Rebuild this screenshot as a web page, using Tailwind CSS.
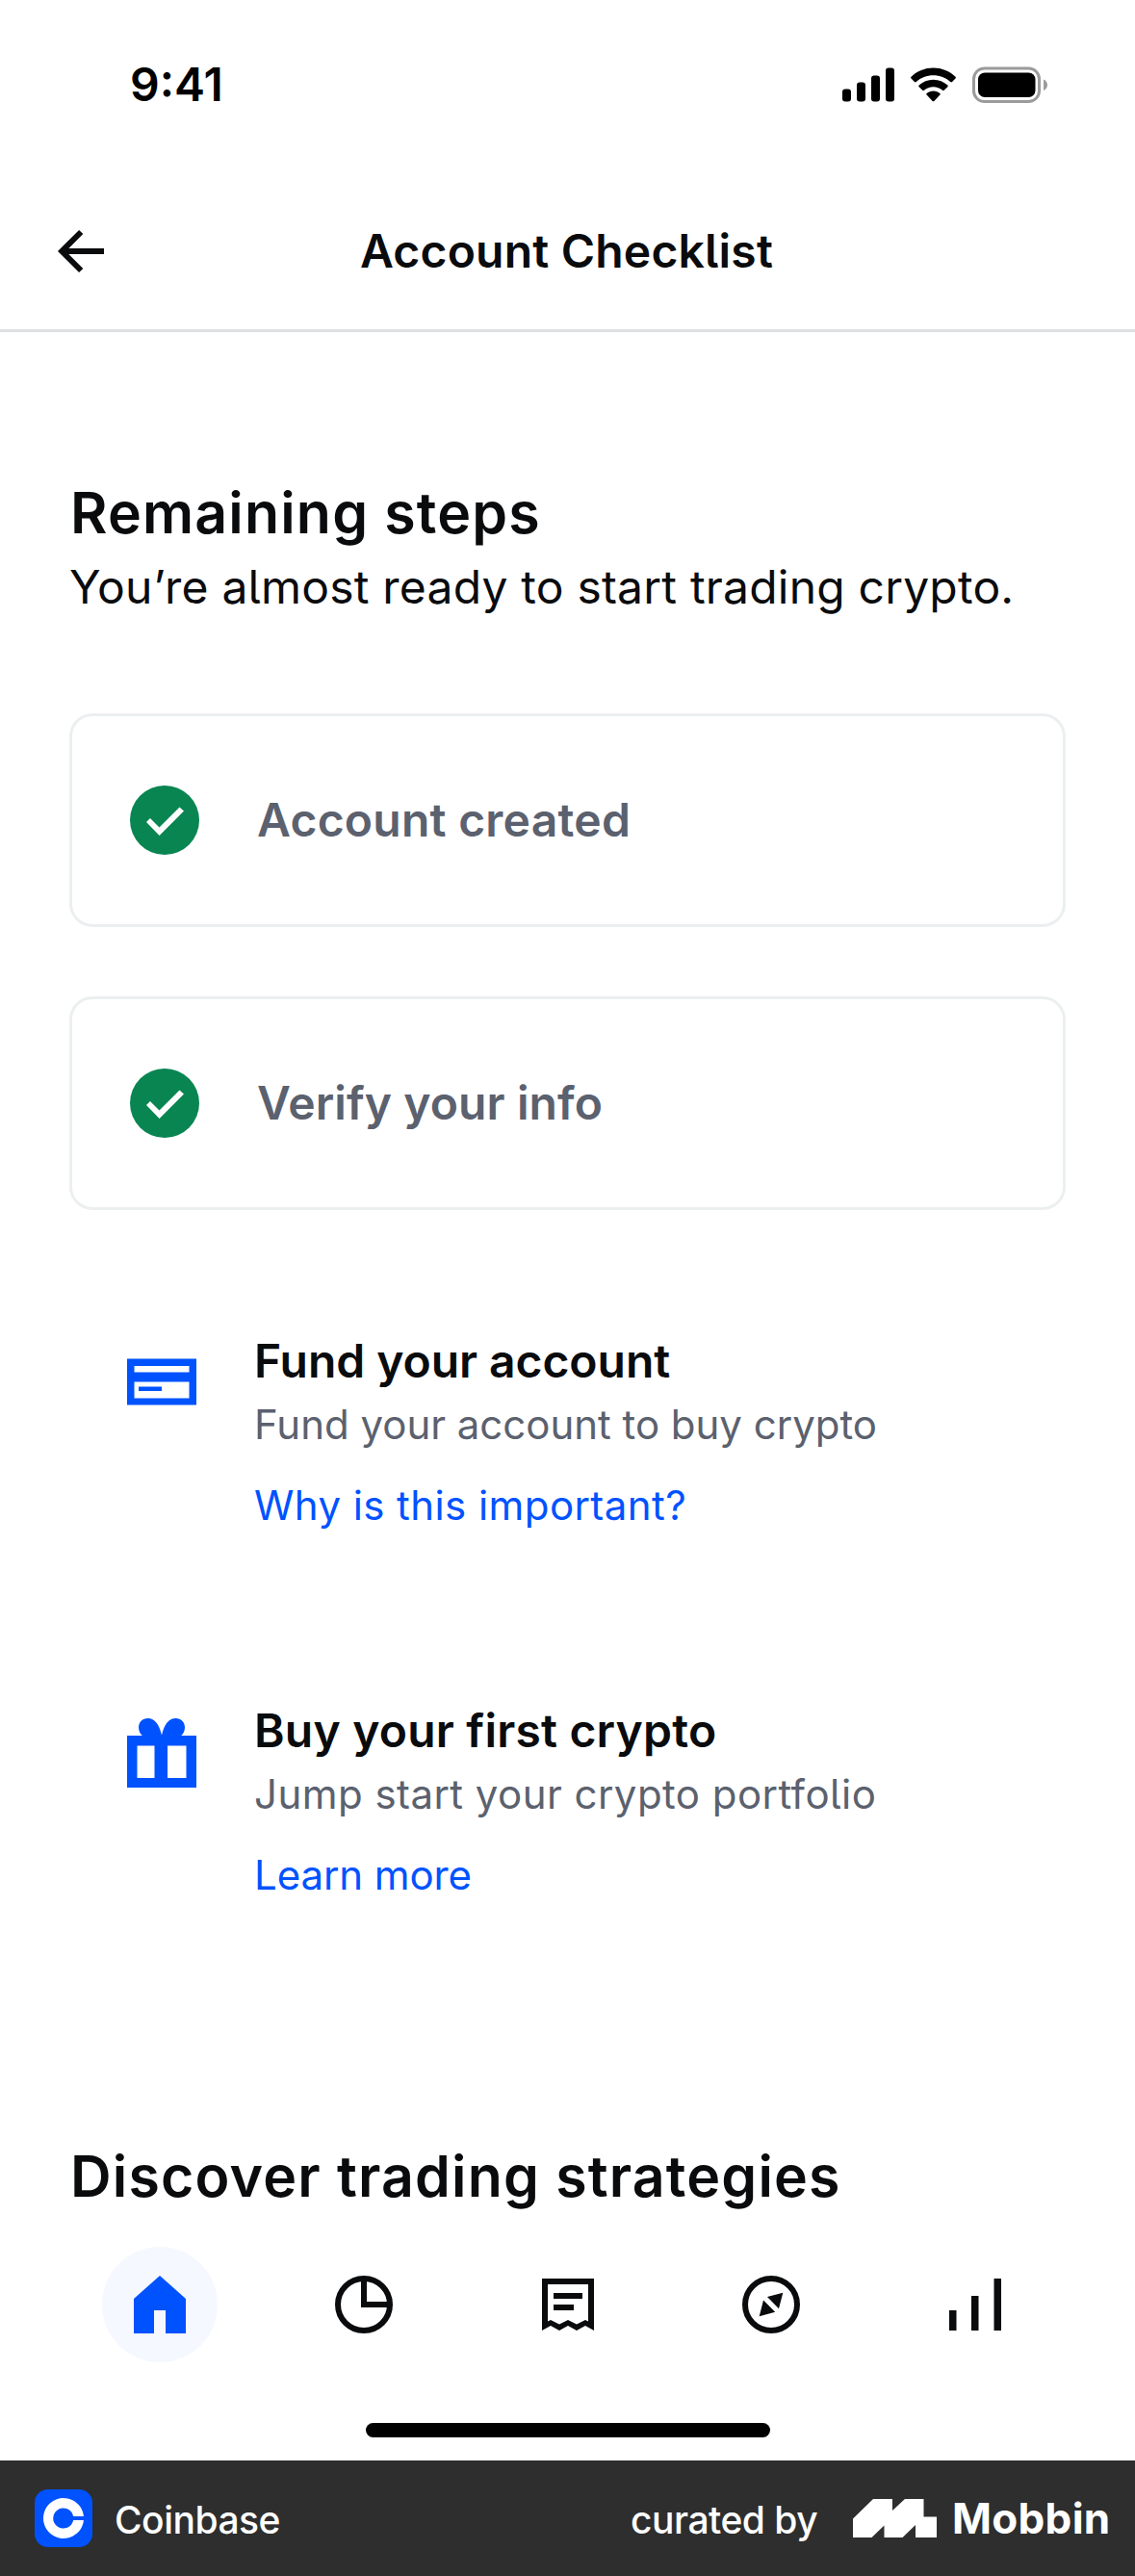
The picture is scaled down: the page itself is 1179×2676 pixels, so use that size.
<!DOCTYPE html>
<html lang="en">
<head>
<meta charset="utf-8">
<title>Account Checklist</title>
<script src="https://cdn.jsdelivr.net/npm/@tailwindcss/browser@4"></script>
</head>
<body class="w-[1179px] bg-white font-['Inter',sans-serif] text-[#0a0b0d] whitespace-nowrap [font-feature-settings:'cv05']">
<div class="flex h-[2556px] flex-col">

  <!-- Status bar -->
  <div class="flex h-[180px] shrink-0 items-center justify-between pr-[91px] pb-[5px] pl-[135px] text-black">
    <span class="text-5xl leading-[60px] font-semibold">9:41</span>
    <div class="flex items-center">
      <svg class="h-[36px] w-[54px]" viewBox="0 0 54 36" fill="currentColor">
        <rect x="0" y="22.5" width="9" height="13" rx="3"/><rect x="15" y="15.500" width="9" height="20" rx="3"/><rect x="30" y="8.500" width="9" height="27" rx="3"/><rect x="45" y="0.500" width="9" height="35" rx="3"/>
      </svg>
      <svg class="ml-[17px] h-[36px] w-[47px]" viewBox="0 0 47 36" fill="currentColor">
        <path d="M23.500 0.500C32.300 0.500 40.500 3.900 46.500 9.700Q47.300 10.600 46.500 11.500L43 15Q42.100 15.800 41.200 15C36.400 10.700 30.200 8.300 23.500 8.300S10.600 10.700 5.800 15Q4.900 15.800 4 15L0.500 11.500Q-0.300 10.600 0.500 9.700C6.500 3.900 14.700 0.500 23.500 0.500Z"/>
        <path d="M23.500 12.700C29.300 12.700 34.500 14.900 38.400 18.500Q39.200 19.400 38.400 20.200L34.700 23.700Q33.900 24.400 33 23.700C30.400 21.500 27.100 20.200 23.500 20.200S16.600 21.500 14 23.700Q13.100 24.400 12.300 23.700L8.600 20.200Q7.800 19.400 8.600 18.500C12.500 14.900 17.700 12.700 23.500 12.700Z"/>
        <path d="M23.500 24.500C26.200 24.500 28.600 25.400 30.400 26.900Q31.200 27.700 30.400 28.600L24.400 34.900Q23.500 35.700 22.600 34.900L16.600 28.600Q15.800 27.700 16.600 26.900C18.400 25.400 20.800 24.500 23.500 24.500Z"/>
      </svg>
      <svg class="ml-[17px] h-[38px] w-[78px]" viewBox="0 0 78 38">
        <rect x="1.500" y="2" width="68" height="34.500" rx="11" fill="none" stroke="#9b9b9b" stroke-width="3"/>
        <rect x="6" y="6.500" width="59.500" height="25.500" rx="7" fill="#000"/>
        <path d="M74 13.500Q78 15.500 78 19.300T74 25Z" fill="#9b9b9b"/>
      </svg>
    </div>
  </div>

  <!-- Title bar -->
  <header class="relative flex h-[165px] shrink-0 items-center justify-center border-b-[3px] border-[#dedfe0]">
    <svg class="absolute left-[60px] h-[46px] w-[48px]" viewBox="0 0 48 46" fill="none" stroke="currentColor" stroke-width="6">
      <path d="M48 23H4M24.200 3L4.200 23L24.200 43"/>
    </svg>
    <h1 class="pr-[2px] text-5xl leading-[60px] font-semibold tracking-[0.2px]">Account Checklist</h1>
  </header>

  <main class="flex flex-col px-[72px] pt-[152px]">
    <h2 class="pl-px text-[59px] leading-[72px] font-semibold tracking-[1.18px]">Remaining steps</h2>
    <p class="text-5xl leading-[82px] tracking-[0.2px]">You’re almost ready to start trading crypto.</p>

    <div class="mt-[90px] flex flex-col gap-[72px] text-5xl leading-[66px] font-semibold text-[#5b616e]">
      <div class="flex h-[222px] items-center gap-[60px] rounded-[24px] border-[3px] border-[#eceff0] pl-[60px]">
        <svg class="size-[72px]" viewBox="0 0 72 72"><circle cx="36" cy="36" r="36" fill="#098551"/><path d="M17 38L21 34L30.500 43.500L51.500 22.500L56 26.500L30.600 52Z" fill="#fff"/></svg>
        <span class="tracking-[0.25px]">Account created</span>
      </div>
      <div class="flex h-[222px] items-center gap-[60px] rounded-[24px] border-[3px] border-[#eceff0] pl-[60px]">
        <svg class="size-[72px]" viewBox="0 0 72 72"><circle cx="36" cy="36" r="36" fill="#098551"/><path d="M17 38L21 34L30.500 43.500L51.500 22.500L56 26.500L30.600 52Z" fill="#fff"/></svg>
        <span class="tracking-[0.1px]">Verify your info</span>
      </div>
    </div>

    <div class="mt-[124px] flex gap-[60px] pl-[60px]">
      <svg class="mt-[30px] h-[49px] w-[72px]" viewBox="0 0 72 49" fill="#0052ff">
        <path fill-rule="evenodd" d="M0 0.500H72V48.500H0ZM7.500 8V14.500H64.500V8ZM7.500 24.500V41.500H64.500V24.500Z"/>
        <rect x="12" y="29.500" width="24" height="4.500"/>
      </svg>
      <div class="flex flex-col items-start text-[42px]">
        <h3 class="text-5xl leading-[66px] font-semibold tracking-[-0.05px]">Fund your account</h3>
        <p class="leading-[66px] tracking-[-0.02px] text-[#5b616e]">Fund your account to buy crypto</p>
        <a class="mt-[21px] leading-[60px] tracking-[0.42px] text-[#0052ff]">Why is this important?</a>
      </div>
    </div>

    <div class="mt-[171px] flex gap-[60px] pl-[60px]">
      <svg class="mt-[19px] h-[73px] w-[72px]" viewBox="0 0 72 73" fill="#0052ff">
        <path fill-rule="evenodd" d="M0 19H72V73H0ZM10.500 29.500V63H28.500V29.500ZM42 29.500V63H61.500V29.500Z"/>
        <path d="M36 20H17C13.500 17.500 12 14 12 10.500C12 5 16 1 21.500 1C29 1 33.500 8 36 18.500C38.500 8 43 1 50.500 1C56 1 60 5 60 10.500C60 14 58.500 17.500 55 20Z"/>
      </svg>
      <div class="flex flex-col items-start text-[42px]">
        <h3 class="text-5xl leading-[66px] font-semibold tracking-[0.2px]">Buy your first crypto</h3>
        <p class="leading-[66px] tracking-[0.45px] text-[#5b616e]">Jump start your crypto portfolio</p>
        <a class="mt-[21px] leading-[60px] tracking-[-0.1px] text-[#0052ff]">Learn more</a>
      </div>
    </div>

    <h2 class="mt-[247px] pl-px text-[59px] leading-[72px] font-semibold tracking-[1.18px]">Discover trading strategies</h2>
  </main>

  <!-- Tab bar -->
  <nav class="grid grid-cols-5 justify-items-center px-[60px] pt-[37px]">
    <div class="flex size-[120px] items-center justify-center rounded-full bg-[#f5f8ff]">
      <svg class="size-[60px]" viewBox="0 0 60 60" fill="#0052ff"><path d="M30 0L57 24V60H36V36H24V60H3V24Z"/></svg>
    </div>
    <div class="flex size-[120px] items-center justify-center">
      <svg class="size-[60px]" viewBox="0 0 60 60" fill="none" stroke="currentColor" stroke-width="6"><circle cx="30" cy="30" r="27"/><path d="M30 3V30H57"/></svg>
    </div>
    <div class="flex size-[120px] items-center justify-center pl-px">
      <svg class="size-[60px]" viewBox="0 0 60 60" fill="currentColor">
        <path fill-rule="evenodd" d="M3 3H57V57L48 52L39 57L30 52L21 57L12 52L3 57ZM9 9V47.500L12 46L21 50.500L30 46L39 50.500L48 46L51 47.500V9Z"/>
        <path d="M15 18H45V24H15ZM15 30H36V36H15Z"/>
      </svg>
    </div>
    <div class="flex size-[120px] items-center justify-center">
      <svg class="size-[60px]" viewBox="0 0 60 60" fill="currentColor"><circle cx="30" cy="30" r="27" fill="none" stroke="currentColor" stroke-width="6"/><path d="M42.300 17.700L26 22L38 34.200ZM17.700 42.300L22 25.500L34.200 37.700Z"/></svg>
    </div>
    <div class="flex size-[120px] items-center justify-center">
      <svg class="size-[60px]" viewBox="0 0 60 60" fill="currentColor"><path d="M3 36H10.500V57H3ZM26 21H33.500V57H26ZM49.500 3H57V57H49.500Z"/></svg>
    </div>
  </nav>
  <div class="mt-[63px] h-[15px] w-[420px] self-center rounded-full bg-black"></div>
</div>

<!-- Attribution bar -->
<footer class="flex h-[120px] items-center bg-[#2e2e2e] pl-[36px] text-[39px] leading-[48px] font-medium text-white [font-feature-settings:normal]">
  <svg class="size-[60px]" viewBox="0 0 60 60">
    <rect width="60" height="60" rx="14" fill="#0052ff"/>
    <path d="M40.200 32A10.600 10.600 0 1 1 40.200 28H50.900A21 21 0 1 0 50.900 32Z" fill="#fff"/>
  </svg>
  <span class="ml-[23px] w-[173px] pt-[3px] tracking-[-0.5px]">Coinbase</span>
  <span class="ml-[363px] w-[195px] pt-[3px] tracking-[-0.5px]">curated by</span>
  <svg class="ml-[36px] h-[40px] w-[87px]" viewBox="0 0 87 40" fill="#fff">
    <path d="M0 20.500L21 0H41V12L54 0H73.500V18.500H87V40H65V27L51.500 40H32.500V27.500L19.500 40H0Z"/>
  </svg>
  <span class="ml-[16px] text-[44px] font-bold tracking-[0.3px]">Mobbin</span>
</footer>
</body>
</html>
